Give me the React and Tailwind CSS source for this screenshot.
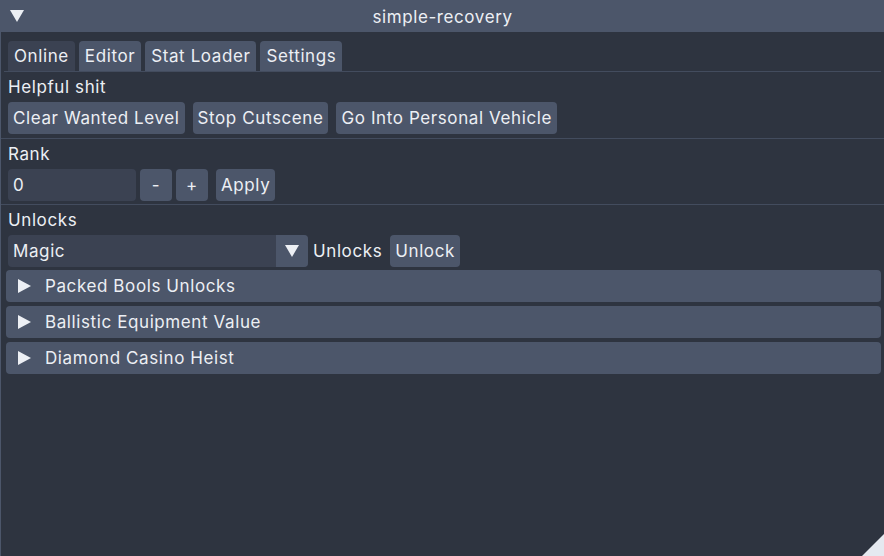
import React from "react";

const Btn = ({ children, className = "" }) => (
  <div className={"h-8 px-[5px] pt-px flex items-center rounded-[4px] bg-[#4c566a] whitespace-nowrap " + className}>{children}</div>
);

const Tri = ({ dir = "down", className = "" }) =>
  dir === "down" ? (
    <svg width="14" height="12" viewBox="0 0 14 12" className={className}><polygon points="0,0 14,0 7,12" fill="#eceff4" /></svg>
  ) : (
    <svg width="13" height="14" viewBox="0 0 13 14" className={className}><polygon points="0,0 13,7 0,14" fill="#eceff4" /></svg>
  );

const Header = ({ children }) => (
  <div className="h-8 ml-[5px] mr-[3px] flex items-center rounded-[4px] bg-[#4c566a]">
    <Tri dir="right" className="ml-[12px] mr-[14px]" />
    <span className="pt-px">{children}</span>
  </div>
);

const Tab = ({ children, active }) => (
  <div className={"h-[30px] px-[6px] pt-px flex items-center rounded-t-[4px] " + (active ? "bg-[#3b4252]" : "bg-[#4c566a]")}>{children}</div>
);

export default function App() {
  return (
    <div className="w-[884px] h-[556px] relative overflow-hidden bg-[#2e3440] text-[#eceff4] text-[17px] tracking-[0.6px] leading-none border-l border-[#4c566a]" style={{ fontFamily: "Inter, 'Noto Sans', sans-serif" }}>
      <div className="h-8 bg-[#4c566a] flex items-center relative">
        <Tri className="ml-[9px]" />
        <div className="absolute inset-0 pt-[2px] flex items-center justify-center">simple-recovery</div>
      </div>
      <div className="pt-[9px]">
        <div className="flex gap-1 border-b border-[#434c5e] ml-[3px] mr-[3px] pl-[4px]">
          <Tab active>Online</Tab>
          <Tab>Editor</Tab>
          <Tab>Stat Loader</Tab>
          <Tab>Settings</Tab>
        </div>
        <div className="px-[7px] pt-px h-[30px] flex items-center">Helpful shit</div>
        <div className="px-[7px] flex gap-2">
          <Btn>Clear Wanted Level</Btn>
          <Btn>Stop Cutscene</Btn>
          <Btn>Go Into Personal Vehicle</Btn>
        </div>
        <div className="h-px bg-[#434c5e] mt-[4px]" />
        <div className="px-[7px] pt-px h-[30px] flex items-center">Rank</div>
        <div className="px-[7px] flex items-center">
          <div className="h-8 w-[128px] px-[5px] pt-px flex items-center rounded-[4px] bg-[#3b4252]">0</div>
          <Btn className="ml-1 w-8 justify-center">-</Btn>
          <Btn className="ml-1 w-8 justify-center">+</Btn>
          <Btn className="ml-2">Apply</Btn>
        </div>
        <div className="h-px bg-[#434c5e] mt-[3px]" />
        <div className="px-[7px] pt-px h-[30px] flex items-center">Unlocks</div>
        <div className="px-[7px] flex items-center">
          <div className="h-8 w-[300px] flex rounded-[4px] bg-[#3b4252] overflow-hidden">
            <div className="flex-1 px-[5px] pt-px flex items-center">Magic</div>
            <div className="w-8 bg-[#4c566a] flex items-center justify-center"><Tri /></div>
          </div>
          <span className="ml-[5px] pt-px">Unlocks</span>
          <Btn className="ml-2">Unlock</Btn>
        </div>
        <div className="flex flex-col gap-1 mt-[3px]">
          <Header>Packed Bools Unlocks</Header>
          <Header>Ballistic Equipment Value</Header>
          <Header>Diamond Casino Heist</Header>
        </div>
      </div>
      <svg className="absolute right-0 bottom-0" width="22" height="22" viewBox="0 0 22 22"><polygon points="22,0 22,22 0,22" fill="#e5e9f0" /></svg>
    </div>
  );
}
